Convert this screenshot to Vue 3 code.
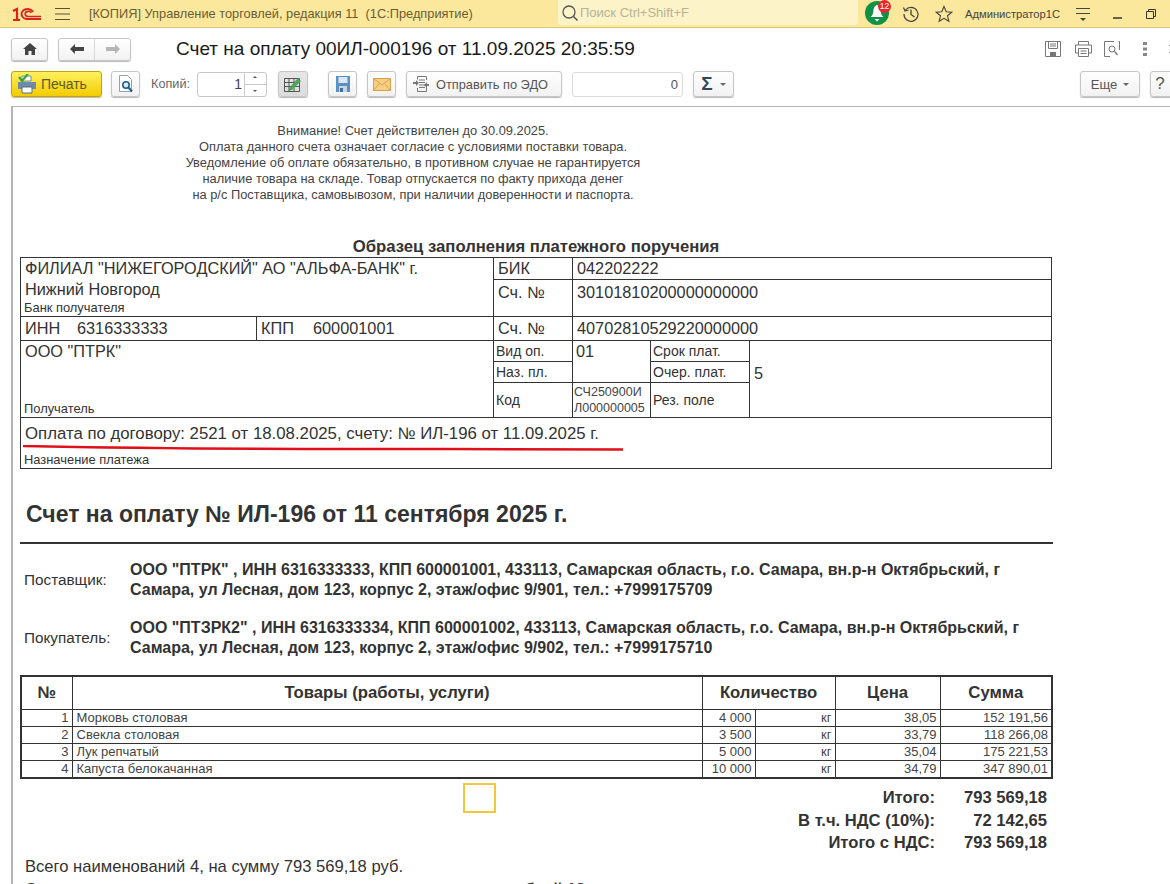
<template>
  <div class="app">
    <header class="topbar">
      <svg class="logo" viewBox="0 0 30 16" width="30" height="16">
        <path d="M1 5 L5 3 V14 M1 14 H8" fill="none" stroke="#d9231f" stroke-width="2.2" />
        <path d="M21 6 A6 5 0 1 0 16 13 H29" fill="none" stroke="#d9231f" stroke-width="2" />
        <path d="M19 7 A3 2.6 0 1 0 16 10.500 H29" fill="none" stroke="#d9231f" stroke-width="1.6" />
      </svg>
      <svg class="burger" viewBox="0 0 16 12" width="16" height="12">
        <path d="M0 .5H15M0 6H15M0 11.500H15" stroke="#55503a" stroke-width="1" />
      </svg>
      <span class="app-title">[КОПИЯ] Управление торговлей, редакция 11&nbsp; (1С:Предприятие)</span>
      <div class="search">
        <svg viewBox="0 0 18 18" width="18" height="18">
          <circle cx="8" cy="8" r="6" fill="none" stroke="#555" stroke-width="1.3" />
          <path d="M12.500 12.500 L16.500 16.500" stroke="#555" stroke-width="1.600" />
        </svg>
        <span>Поиск Ctrl+Shift+F</span>
      </div>
      <div class="bell">
        <svg viewBox="0 0 24 24" width="24" height="24">
          <circle cx="12" cy="12" r="12" fill="#0f9147" />
          <path d="M12 4 C8.500 5 8.500 9 8 12 C7.700 14 6.500 15 5.500 16 H18.500 C17.500 15 16.300 14 16 12 C15.500 9 15.500 5 12 4Z" fill="#fff" />
          <path d="M9.500 18 H14.500 L12 20.500Z" fill="#fff" />
        </svg>
        <span class="badge">12</span>
      </div>
      <svg class="history" viewBox="0 0 18 18" width="18" height="18">
        <path d="M3.500 5 A7 7 0 1 1 2 9" fill="none" stroke="#444" stroke-width="1.200" />
        <path d="M1.500 2.500 L3 6 L6.500 5" fill="none" stroke="#444" stroke-width="1.200" />
        <path d="M9 4.500 V9.500 L12.500 12" fill="none" stroke="#444" stroke-width="1.300" />
      </svg>
      <svg class="star" viewBox="0 0 18 18" width="18" height="18">
        <path d="M9 1.500 L11.200 6.700 L16.800 7.200 L12.500 10.800 L13.900 16.300 L9 13.400 L4.100 16.300 L5.500 10.800 L1.200 7.200 L6.800 6.700Z" fill="none" stroke="#444" stroke-width="1.100" />
      </svg>
      <span class="user">Администратор1С</span>
      <svg class="user-menu" viewBox="0 0 16 16" width="16" height="16">
        <path d="M1 2.500H15M1 7.500H15" stroke="#444" stroke-width="1" />
        <path d="M5 12 H11 L8 15Z" fill="#444" />
      </svg>
      <svg class="minimize" viewBox="0 0 9 4" width="9" height="4">
        <path d="M0 2H9" stroke="#333" stroke-width="1.500" />
      </svg>
      <svg class="restore" viewBox="0 0 10 10" width="10" height="10">
        <path d="M.5 2.500H7.500V9.500H.5ZM2.500 2.500V.5H9.500V7.500H7.500" fill="none" stroke="#333" stroke-width="1" />
      </svg>
    </header>

    <div class="title-row">
      <button class="btn home" type="button">
        <svg viewBox="0 0 14 12" width="14" height="12">
          <path d="M7 0 L14 6 H12 V12 H8.500 V8 H5.500 V12 H2 V6 H0Z" fill="#444" />
        </svg>
      </button>
      <div class="btn nav">
        <span class="nav-part">
          <svg viewBox="0 0 14 10" width="14" height="10"><path d="M0 5 L5 0 V3 H14 V7 H5 V10Z" fill="#444" /></svg>
        </span>
        <span class="nav-part">
          <svg viewBox="0 0 14 10" width="14" height="10"><path d="M14 5 L9 0 V3 H0 V7 H9 V10Z" fill="#b5b5b5" /></svg>
        </span>
      </div>
      <h1 class="doc-title">Счет на оплату 00ИЛ-000196 от 11.09.2025 20:35:59</h1>
      <div class="title-tools">
        <svg viewBox="0 0 16 16" width="16" height="16">
          <path d="M.5 .5H15.500V15.500H.5Z" fill="none" stroke="#777" />
          <path d="M3.500 .5V7.500H12.500V.5M5 3H11M5 5H11" fill="none" stroke="#777" />
          <path d="M5 11H11V15H5Z" fill="#777" />
        </svg>
        <svg viewBox="0 0 17 16" width="17" height="16">
          <path d="M3.500 4V.5H13.500V4M.5 4H16.500V12H13.500M3.500 12H.5V4" fill="none" stroke="#777" />
          <path d="M3.500 7.500H13.500V15.500H3.500ZM5.500 10H11.500M5.500 12.500H11.500" fill="none" stroke="#777" />
        </svg>
        <svg class="find" viewBox="0 0 16 16" width="16" height="16">
          <path d="M10 .5H.5V15.500H6M14.500 .5H15.500V9" fill="none" stroke="#777" />
          <circle cx="8" cy="8" r="3" fill="none" stroke="#777" />
          <path d="M10.500 10.500L13.500 14" stroke="#777" stroke-width="1.300" />
        </svg>
        <svg class="dots" viewBox="0 0 4 14" width="4" height="14">
          <path d="M0 0H4V3H0ZM0 5.500H4V8.500H0ZM0 11H4V14H0Z" fill="#888" />
        </svg>
        <svg class="close" viewBox="0 0 8 8" width="8" height="8">
          <path d="M0 0L8 8M8 0L0 8" stroke="#777" stroke-width="1" />
        </svg>
      </div>
    </div>

    <div class="toolbar">
      <button class="btn print" type="button">
        <svg viewBox="0 0 20 20" width="20" height="20">
          <path d="M5 7V2H14V7Z" fill="#fff" stroke="#6d8ca8" />
          <path d="M1 8H19V15H1Z" fill="#6d8ca8" />
          <path d="M5 13H15V19H5Z" fill="#fff" stroke="#55708a" />
          <path d="M2 3 L5 7 L11 0" fill="none" stroke="#3ba53b" stroke-width="2.200" />
        </svg>
        Печать
      </button>
      <button class="btn icon-btn preview" type="button">
        <svg viewBox="0 0 16 18" width="16" height="18">
          <path d="M1.500 .5H9.500L13.500 4.500V16.500H1.500Z" fill="#fff" stroke="#8aa3b8" />
          <circle cx="8" cy="10" r="3.200" fill="#dce9f3" stroke="#1b5e8c" stroke-width="1.600" />
          <path d="M10.500 12.500L14 16.500" stroke="#1b5e8c" stroke-width="2" />
        </svg>
      </button>
      <span class="copies-label">Копий:</span>
      <div class="copies">
        <span class="copies-value">1</span>
        <span class="spin">
          <i class="spin-up"></i>
          <i class="spin-down"></i>
        </span>
      </div>
      <button class="btn icon-btn grid-edit" type="button">
        <svg viewBox="0 0 18 16" width="18" height="16">
          <path d="M.5 2.500H15.500V15.500H.5ZM.5 6.500H15.500M.5 10.500H15.500M5 2.500V15.500M10 2.500V15.500" fill="none" stroke="#555" />
          <path d="M5 12 L14 2 L17 5 L8 14 L4.500 15Z" fill="#4fa35a" />
        </svg>
      </button>
      <button class="btn icon-btn save" type="button">
        <svg viewBox="0 0 14 16" width="14" height="16">
          <path d="M0 0H14V16H0Z" fill="#5d8fc0" />
          <path d="M2.500 1H11.500V7H2.500Z" fill="#dbe8f4" />
          <path d="M3 10H11V16H3Z" fill="#c4d7e8" />
          <path d="M4 12H7V16H4Z" fill="#466f99" />
        </svg>
      </button>
      <button class="btn icon-btn mail" type="button">
        <svg viewBox="0 0 18 13" width="18" height="13">
          <path d="M.5 .5H17.500V12.500H.5Z" fill="#f6cf86" stroke="#d9a24a" />
          <path d="M.5 .5L9 7L17.500 .5M.5 12.500L6.500 5.500M17.500 12.500L11.500 5.500" fill="none" stroke="#d9a24a" />
        </svg>
      </button>
      <button class="btn send" type="button">
        <svg viewBox="0 0 16 16" width="16" height="16">
          <path d="M4.500 .5H13.500V4M4.500 3.500V.5M13.500 11V15.500H4.500V12M6 4H12M6 6.500H12M6 9H12M6 11.500H12" fill="none" stroke="#777" />
          <path d="M0 7H3V5L6 8L3 11V9H0Z" fill="#777" transform="translate(0 -1)" />
          <path d="M16 8H14V6L11 9L14 12V10H16Z" fill="#777" />
        </svg>
        Отправить по ЭДО
      </button>
      <div class="sum-field">0</div>
      <button class="btn sigma" type="button"><span class="sigma-sign">Σ</span><i class="caret"></i></button>
      <button class="btn more" type="button">Еще<i class="caret"></i></button>
      <button class="btn help" type="button">?</button>
    </div>

    <main class="document">
      <div class="notice">
        Внимание! Счет действителен до 30.09.2025.<br>
        Оплата данного счета означает согласие с условиями поставки товара.<br>
        Уведомление об оплате обязательно, в противном случае не гарантируется<br>
        наличие товара на складе. Товар отпускается по факту прихода денег<br>
        на р/с Поставщика, самовывозом, при наличии доверенности и паспорта.
      </div>

      <div class="sample-title">Образец заполнения платежного поручения</div>

      <table class="bank">
        <colgroup>
          <col style="width: 236px">
          <col style="width: 237px">
          <col style="width: 79px">
          <col style="width: 78px">
          <col style="width: 99px">
          <col style="width: 302px">
        </colgroup>
        <tr class="r22">
          <td colspan="2" rowspan="2" class="stack">
            <div class="bank-name">ФИЛИАЛ "НИЖЕГОРОДСКИЙ" АО "АЛЬФА-БАНК" г.<br>Нижний Новгород</div>
            <div class="caption">Банк получателя</div>
          </td>
          <td class="big">БИК</td>
          <td colspan="3" class="big">042202222</td>
        </tr>
        <tr class="r37">
          <td class="big top pad">Сч. №</td>
          <td colspan="3" class="big top pad">30101810200000000000</td>
        </tr>
        <tr class="r23">
          <td class="big"><span class="req-label">ИНН</span>6316333333</td>
          <td class="big"><span class="req-label">КПП</span>600001001</td>
          <td class="big">Сч. №</td>
          <td colspan="3" class="big">40702810529220000000</td>
        </tr>
        <tr class="r21">
          <td colspan="2" rowspan="3" class="stack">
            <div class="bank-name">ООО "ПТРК"</div>
            <div class="caption">Получатель</div>
          </td>
          <td class="small">Вид оп.</td>
          <td rowspan="2" class="big top tight">01</td>
          <td class="small">Срок плат.</td>
          <td rowspan="3" class="big priority">5</td>
        </tr>
        <tr class="r21">
          <td class="small">Наз. пл.</td>
          <td class="small">Очер. плат.</td>
        </tr>
        <tr class="r35">
          <td class="small">Код</td>
          <td class="code">СЧ250900И<br>Л000000005</td>
          <td class="small">Рез. поле</td>
        </tr>
        <tr class="r51">
          <td colspan="6" class="stack purpose">
            <div class="big-text">Оплата по договору: 2521 от 18.08.2025, счету: № ИЛ-196 от 11.09.2025 г.</div>
            <div class="caption">Назначение платежа</div>
            <svg class="underline" viewBox="0 0 600 6" width="600" height="6">
              <path d="M0 1 C120 3.500 240 4 330 4 S520 4 600 4.500" fill="none" stroke="#e0101a" stroke-width="2.500" />
            </svg>
          </td>
        </tr>
      </table>

      <h2 class="invoice-title">Счет на оплату № ИЛ-196 от 11 сентября 2025 г.</h2>

      <div class="party first">
        <span>Поставщик:</span>
        <strong>ООО "ПТРК" , ИНН 6316333333, КПП 600001001, 433113, Самарская область, г.о. Самара, вн.р-н Октябрьский, г<br>Самара, ул Лесная, дом 123, корпус 2, этаж/офис 9/901, тел.: +7999175709</strong>
      </div>
      <div class="party">
        <span>Покупатель:</span>
        <strong>ООО "ПТЗРК2" , ИНН 6316333334, КПП 600001002, 433113, Самарская область, г.о. Самара, вн.р-н Октябрьский, г<br>Самара, ул Лесная, дом 123, корпус 2, этаж/офис 9/902, тел.: +7999175710</strong>
      </div>

      <table class="goods">
        <colgroup>
          <col style="width: 51px">
          <col style="width: 630px">
          <col style="width: 53px">
          <col style="width: 80px">
          <col style="width: 105px">
          <col style="width: 112px">
        </colgroup>
        <thead>
          <tr>
            <th>№</th>
            <th>Товары (работы, услуги)</th>
            <th colspan="2">Количество</th>
            <th>Цена</th>
            <th>Сумма</th>
          </tr>
        </thead>
        <tbody>
          <tr v-for="(row, index) in goods" :key="row.name">
            <td class="num">{{ index + 1 }}</td>
            <td class="name">{{ row.name }}</td>
            <td class="num">{{ row.qty }}</td>
            <td class="num">кг</td>
            <td class="num">{{ row.price }}</td>
            <td class="num">{{ row.sum }}</td>
          </tr>
        </tbody>
      </table>

      <div class="totals">
        <div class="cell-cursor"></div>
        <template v-for="item in totals" :key="item.label">
          <span>{{ item.label }}</span>
          <span>{{ item.value }}</span>
        </template>
      </div>

      <p class="summary">Всего наименований 4, на сумму 793 569,18 руб.</p>
      <p class="summary words">Семьсот девяносто три тысячи пятьсот шестьдесят девять рублей 18 копеек</p>
    </main>
  </div>
</template>

<script setup>
const goods = [
  { name: 'Морковь столовая', qty: '4 000', price: '38,05', sum: '152 191,56' },
  { name: 'Свекла столовая', qty: '3 500', price: '33,79', sum: '118 266,08' },
  { name: 'Лук репчатый', qty: '5 000', price: '35,04', sum: '175 221,53' },
  { name: 'Капуста белокачанная', qty: '10 000', price: '34,79', sum: '347 890,01' }
]

const totals = [
  { label: 'Итого:', value: '793 569,18' },
  { label: 'В т.ч. НДС (10%):', value: '72 142,65' },
  { label: 'Итого с НДС:', value: '793 569,18' }
]
</script>

<style>
html,
body {
  height: 100%;
  overflow: hidden;
  background: #fff;
}
</style>

<style scoped>
.app {
  width: 1170px;
  height: 884px;
  overflow: hidden;
  background: #fff;
  font-family: "Liberation Sans", Arial, sans-serif;
  color: #333;
}

.topbar {
  display: flex;
  align-items: center;
  height: 27px;
  border-bottom: 1px solid #d9c77d;
  background: #fbe89d;
}

.logo { margin-left: 12px; flex: none; }
.burger { margin-left: 13px; flex: none; }

.app-title {
  margin-left: 18px;
  width: 469px;
  flex: none;
  font-size: 12.800px;
  color: #6a5d33;
  white-space: nowrap;
}

.search {
  display: flex;
  align-items: center;
  gap: 1px;
  width: 300px;
  height: 25px;
  align-self: flex-start;
  flex: none;
  box-sizing: border-box;
  padding-left: 3px;
  border-radius: 0 0 3px 3px;
  background: #fdf3c9;
  color: #b8b296;
  font-size: 13px;
}

.bell {
  position: relative;
  width: 24px;
  height: 24px;
  margin: -2px 0 0 7px;
  flex: none;
}

.bell svg { display: block; }

.badge {
  position: absolute;
  top: -1px;
  right: -2px;
  width: 13px;
  height: 13px;
  border-radius: 50%;
  background: #e8262c;
  color: #fff;
  font-size: 8.5px;
  line-height: 13px;
  text-align: center;
}

.history { margin-left: 13px; flex: none; }
.star { margin-left: 15px; flex: none; }

.user {
  margin-left: 12px;
  width: 95px;
  flex: none;
  font-size: 11.200px;
  color: #444;
  white-space: nowrap;
}

.user-menu { margin-left: 15px; flex: none; }
.minimize { margin: 8px 0 0 22px; flex: none; }
.restore { margin-left: 24px; flex: none; }

.btn {
  display: flex;
  align-items: center;
  justify-content: center;
  box-sizing: border-box;
  flex: none;
  padding: 0;
  border: 1px solid #c6c6c6;
  border-radius: 3px;
  background: linear-gradient(#fff, #f1f1f1);
  box-shadow: 0 1px 1px rgba(0, 0, 0, 0.28);
  font: inherit;
  font-size: 13px;
  color: #555;
}

.title-row {
  display: flex;
  align-items: center;
  height: 42px;
}

.home {
  width: 37px;
  height: 23px;
  margin-left: 11px;
}

.nav {
  width: 73px;
  height: 23px;
  margin-left: 10px;
}

.nav-part {
  display: flex;
  align-items: center;
  justify-content: center;
  width: 50%;
  height: 100%;
}

.nav-part + .nav-part { border-left: 1px solid #d8d8d8; }

.doc-title {
  margin: 0 0 0 45px;
  font-size: 19px;
  font-weight: 400;
  color: #1a1a1a;
  white-space: nowrap;
}

.title-tools {
  display: flex;
  align-items: center;
  gap: 14px;
  margin-left: auto;
  margin-right: -7px;
}

.title-tools .find { margin-left: -2px; }
.title-tools .dots { margin-left: 9px; }
.title-tools .close { margin-left: 8px; }

.toolbar {
  display: flex;
  align-items: center;
  height: 26px;
  margin-top: 1px;
}

.toolbar .btn { height: 26px; }

.print {
  justify-content: flex-start;
  gap: 4px;
  width: 91px;
  margin-left: 11px;
  padding-left: 5px;
  border-color: #c9a400;
  background: linear-gradient(#fff05e, #f3cc00);
  font-size: 14px;
  color: #5c5a22;
}

.icon-btn { width: 29px; }
.preview { margin-left: 9px; }

.copies-label {
  margin-left: 11px;
  width: 46px;
  flex: none;
  font-size: 12.700px;
  color: #666;
}

.copies {
  display: flex;
  width: 70px;
  height: 25px;
  box-sizing: border-box;
  border: 1px solid #c9c9c9;
  border-radius: 3px;
}

.copies-value {
  flex: 1;
  padding-right: 2px;
  font-size: 14px;
  line-height: 23px;
  text-align: right;
  color: #444;
}

.spin {
  display: flex;
  flex-direction: column;
  width: 21px;
  border-left: 1px solid #c9c9c9;
}

.spin i {
  position: relative;
  flex: 1;
}

.spin-down { border-top: 1px solid #c9c9c9; }

.spin i::after {
  content: "";
  position: absolute;
  left: 8px;
  top: 4px;
  border: 2.500px solid transparent;
}

.spin-up::after { top: 1px !important; border-bottom-color: #555 !important; }
.spin-down::after { top: 5px !important; border-top-color: #555 !important; }

.grid-edit {
  width: 30px;
  margin-left: 11px;
  background: linear-gradient(#e6e6e6, #dcdcdc);
}

.save { margin-left: 20px; }
.mail { margin-left: 10px; }

.send {
  justify-content: flex-start;
  gap: 7px;
  width: 156px;
  margin-left: 10px;
  padding-left: 6px;
  font-size: 12.800px;
}

.sum-field {
  width: 111px;
  height: 25px;
  margin-left: 10px;
  flex: none;
  box-sizing: border-box;
  padding-right: 4px;
  border: 1px solid #dcdcdc;
  border-radius: 3px;
  font-size: 13px;
  line-height: 23px;
  text-align: right;
  color: #555;
}

.sigma {
  gap: 7px;
  width: 41px;
  margin-left: 10px;
}

.sigma-sign {
  font-size: 19px;
  font-weight: 700;
  color: #33475b;
}

.caret {
  width: 0;
  height: 0;
  border-top: 3px solid #666;
  border-left: 3px solid transparent;
  border-right: 3px solid transparent;
}

.more {
  gap: 6px;
  width: 60px;
  margin-left: auto;
}

.help {
  width: 40px;
  margin: 0 -20px 0 10px;
  padding-right: 20px;
  font-size: 17px;
}

.document {
  position: relative;
  height: 778px;
  margin: 9px 0 0 11px;
  box-sizing: border-box;
  padding: 16px 0 0 7px;
  border-top: 1px solid #b4b4b4;
  border-left: 2px solid #b4b4b4;
  overflow: hidden;
}

.notice {
  width: 786px;
  font-size: 12.850px;
  line-height: 16px;
  text-align: center;
  color: #444;
}

.sample-title {
  width: 1032px;
  margin-top: 34px;
  padding-bottom: 1px;
  font-size: 16.700px;
  font-weight: 700;
  line-height: 19px;
  text-align: center;
}

table {
  border-collapse: collapse;
  table-layout: fixed;
  width: 1031px;
}

.bank td {
  padding: 0 4px;
  border: 1px solid #333;
  overflow: hidden;
  white-space: nowrap;
}

.r22 { height: 22px; }
.r37 { height: 37px; }
.r23 { height: 24px; }
.r21 { height: 21px; }
.r35 { height: 35px; }
.r51 { height: 51px; }

.big,
.bank-name {
  font-size: 16.300px;
  line-height: 21px;
  color: #333;
}

.big-text {
  font-size: 16.800px;
  line-height: 21px;
  color: #333;
}

.top { vertical-align: top; }
.bank .pad { padding-top: 2px; }
.bank .tight { padding-left: 3px; }
.bank .priority { padding-bottom: 12px; }

.req-label {
  display: inline-block;
  width: 52px;
}

.bank .small {
  padding: 0 2px;
  font-size: 14px;
}

.bank .code {
  padding: 0 1px 1px;
  font-size: 12.500px;
  line-height: 16px;
  color: #444;
}

.bank .stack {
  position: relative;
  vertical-align: top;
  padding-top: 0;
}

.caption {
  position: absolute;
  left: 3px;
  bottom: 1px;
  font-size: 12.900px;
  line-height: 14px;
}

.bank .purpose { padding-top: 5px; }

.underline {
  position: absolute;
  left: 2px;
  top: 27px;
}

.invoice-title {
  margin: 30px 0 0 6px;
  font-size: 23px;
  line-height: 30px;
  font-weight: 700;
}

.party {
  display: grid;
  grid-template-columns: 106px 1fr;
  align-items: center;
  margin: 18px 0 0 4px;
  font-size: 15.300px;
  line-height: 20px;
}

.party strong { font-size: 16px; }

.party.first {
  margin: 13px 0 0;
  padding: 16px 0 0 4px;
  border-top: 2px solid #333;
  width: 1033px;
  box-sizing: border-box;
}

.goods {
  margin-top: 17px;
  border: 2px solid #333;
}

.goods th {
  height: 32px;
  padding: 0;
  border: 1px solid #333;
  font-size: 16.700px;
  font-weight: 700;
}

.goods td {
  height: 16px;
  padding: 0 3px;
  border: 1px solid #333;
  font-size: 13px;
  line-height: 16px;
  color: #444;
  white-space: nowrap;
}

.goods .name { padding-left: 4px; }
.goods .num { text-align: right; }

.totals {
  position: relative;
  display: grid;
  grid-template-columns: auto 112px;
  justify-content: end;
  width: 1027px;
  margin-top: 8px;
  font-size: 16.600px;
  font-weight: 700;
  line-height: 22.500px;
  text-align: right;
}

.cell-cursor {
  position: absolute;
  left: 443px;
  top: -4px;
  width: 33px;
  height: 30px;
  box-sizing: border-box;
  border: 2px solid #f0c93a;
}

.summary {
  margin: 3px 0 0 5px;
  font-size: 16.600px;
  line-height: 17px;
}

.words {
  margin-top: 6px;
  font-size: 16px;
  font-weight: 700;
}
</style>
